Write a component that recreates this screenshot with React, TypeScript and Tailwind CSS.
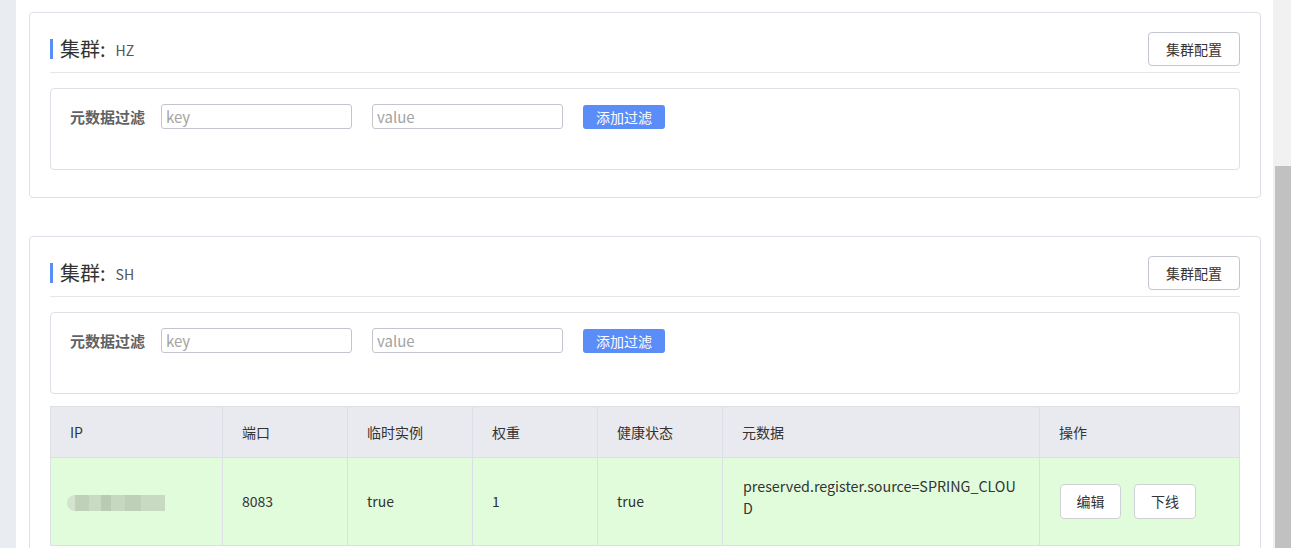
import React from "react"

const font = { fontFamily: '"Noto Sans CJK SC", "Liberation Sans", sans-serif' }

function FilterBox() {
    return (
        <div className="mt-[15px] border border-[#dcdfe6] rounded-[4px] pt-[15px] pb-[40px] pl-[19px] flex items-center">
            <span className="text-[15px] font-bold text-[#606266] leading-[25px] w-[91px]">元数据过滤</span>
            <input
                placeholder="key"
                className="w-[191px] h-[25px] border border-[#c4c4cf] rounded-[3px] px-[4px] text-[15px] text-[#333] placeholder:text-[#a3a3a3] outline-none"
            />
            <input
                placeholder="value"
                className="ml-[20px] w-[191px] h-[25px] border border-[#c4c4cf] rounded-[3px] px-[4px] text-[15px] text-[#333] placeholder:text-[#a3a3a3] outline-none"
            />
            <button className="ml-[20px] w-[82px] h-[24px] rounded-[3px] bg-[#5a8df7] text-white text-[14px] leading-none">
                添加过滤
            </button>
        </div>
    )
}

function ClusterHeader({ name }: { name: string }) {
    return (
        <div className="flex items-center justify-between pb-[6px] border-b border-[#e5e6ea]">
            <div className="flex items-center h-[20px]">
                <span className="w-[3px] h-[20px] bg-[#5a8df7]" />
                <span className="ml-[7px] text-[20px] leading-none text-[#333]">集群:</span>
                <span className="ml-[10px] text-[14px] text-[#555] mt-[3px]">{name}</span>
            </div>
            <button className="w-[92px] h-[34px] rounded-[4px] border border-[#c4c6cf] bg-white text-[14px] text-[#333]">
                集群配置
            </button>
        </div>
    )
}

const cols = [
    { label: "IP", w: "w-[172px]" },
    { label: "端口", w: "w-[125px]" },
    { label: "临时实例", w: "w-[125px]" },
    { label: "权重", w: "w-[125px]" },
    { label: "健康状态", w: "w-[125px]" },
    { label: "元数据", w: "w-[317px]" },
    { label: "操作", w: "flex-1" },
]

function InstanceTable() {
    return (
        <div className="mt-[12px] border border-[#dcdfe6] text-[14px] text-[#333]">
            <div className="flex h-[51px] bg-[#e9eaef] border-b border-[#dcdfe6]">
                {cols.map((c, i) => (
                    <div
                        key={c.label}
                        className={`${c.w} ${i < cols.length - 1 ? "border-r border-[#dcdfe6]" : ""} flex items-center pl-[19px]`}
                    >
                        {c.label}
                    </div>
                ))}
            </div>
            <div className="flex h-[87px] bg-[#e1fcdb]">
                <div className="w-[172px] border-r border-[#dcdfe6] flex items-center pl-[16px]">
                    <div className="flex h-[16px] mt-[2px] blur-[0.6px]">
                        <span className="w-[8px] rounded-l-full bg-[#d3e3cd]" />
                        <span className="w-[14px] bg-[#bfd2b9]" />
                        <span className="w-[12px] bg-[#c9dbc3]" />
                        <span className="w-[10px] bg-[#b9ccb3]" />
                        <span className="w-[14px] bg-[#c6d8c0]" />
                        <span className="w-[16px] bg-[#bed1b8]" />
                        <span className="w-[24px] bg-[#c8dac2]" />
                    </div>
                </div>
                <div className="w-[125px] border-r border-[#dcdfe6] flex items-center pl-[19px]">8083</div>
                <div className="w-[125px] border-r border-[#dcdfe6] flex items-center pl-[19px]">true</div>
                <div className="w-[125px] border-r border-[#dcdfe6] flex items-center pl-[19px]">1</div>
                <div className="w-[125px] border-r border-[#dcdfe6] flex items-center pl-[19px]">true</div>
                <div className="w-[317px] border-r border-[#dcdfe6] flex items-center pl-[20px] pr-[20px] pb-[9px]">
                    <span className="break-all leading-[22px] text-[14.3px]">preserved.register.source=SPRING_CLOUD</span>
                </div>
                <div className="flex-1 flex items-center pl-[20px] gap-[13px]">
                    <button className="w-[61px] h-[35px] rounded-[4px] border border-[#cfd1d6] bg-white text-[14px] text-[#333]">
                        编辑
                    </button>
                    <button className="w-[62px] h-[35px] rounded-[4px] border border-[#cfd1d6] bg-white text-[14px] text-[#333]">
                        下线
                    </button>
                </div>
            </div>
        </div>
    )
}

export default function App() {
    return (
        <div className="flex w-[1291px] h-[548px] overflow-hidden bg-white" style={font}>
            <div className="w-[16px] shrink-0 bg-[#e9ecf1]" />
            <div className="flex-1 pt-[12px]">
                <div className="ml-[13px] mr-[12px] border border-[#dcdfe6] rounded-[4px] pt-[19px] px-[20px] pb-[27px]">
                    <ClusterHeader name="HZ" />
                    <FilterBox />
                </div>
                <div className="mt-[38px] ml-[13px] mr-[12px] border border-[#dcdfe6] rounded-[4px] pt-[19px] px-[20px] pb-[26px]">
                    <ClusterHeader name="SH" />
                    <FilterBox />
                    <InstanceTable />
                </div>
            </div>
            <div className="w-[18px] shrink-0 bg-[#f1f1f1] flex flex-col pt-[166px] pl-[2px]">
                <div className="flex-1 bg-[#c1c1c1]" />
            </div>
        </div>
    )
}
